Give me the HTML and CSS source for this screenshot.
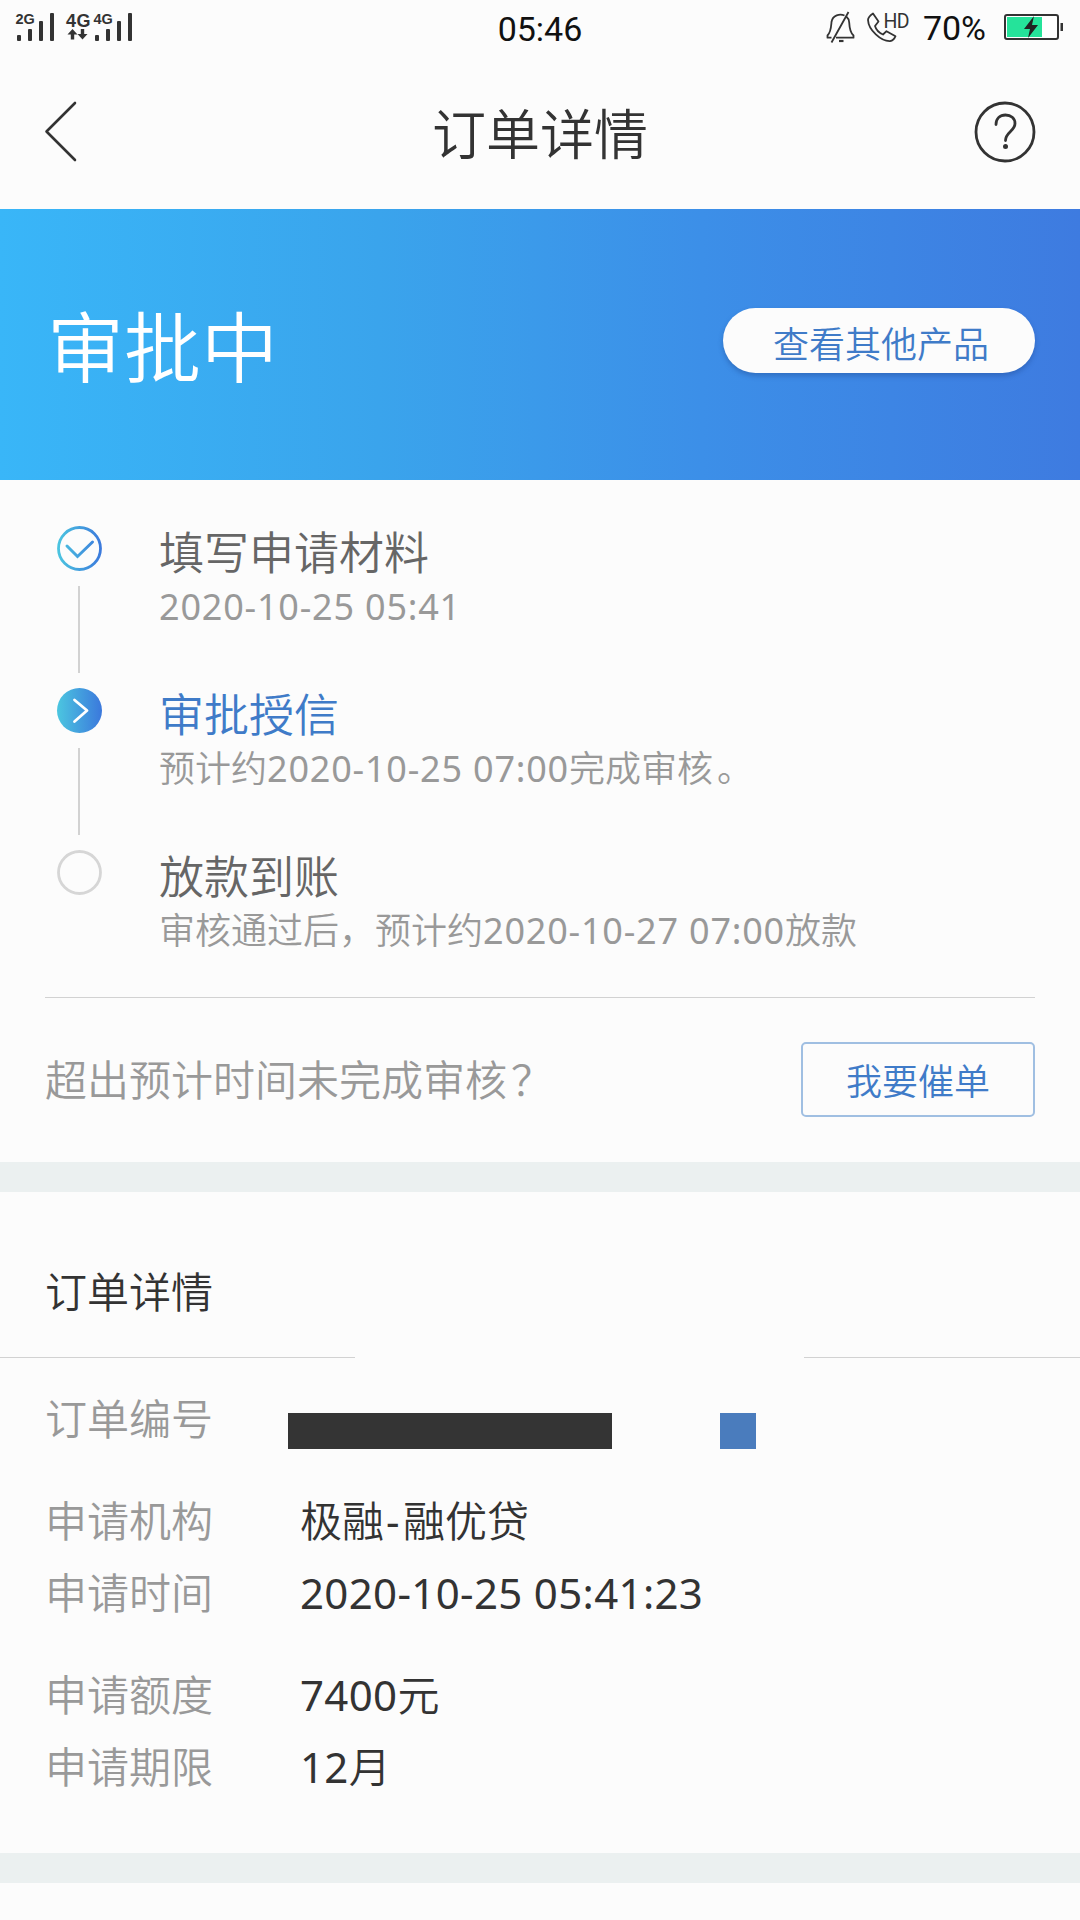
FILE: index.html
```html
<!DOCTYPE html>
<html lang="zh-CN">
<head>
  <meta charset="UTF-8" />
  <title>订单详情</title>
  <meta name="viewport" content="width=device-width, initial-scale=1" />
  <link rel="stylesheet" href="styles.css">
</head>
<body>
  <div class="status-bar">
    <svg class="signal" width="140" height="56" viewBox="0 0 140 56">
      <g fill="#333">
        <rect x="17" y="35" width="4" height="6" rx="1" />
        <rect x="28" y="29" width="4" height="12" rx="1" />
        <rect x="39" y="21" width="4" height="20" rx="1" />
        <rect x="50" y="13" width="4" height="28" rx="1" />
        <rect x="95" y="35" width="4" height="6" rx="1" />
        <rect x="106" y="29" width="4" height="12" rx="1" />
        <rect x="117" y="21" width="4" height="20" rx="1" />
        <rect x="128" y="13" width="4" height="28" rx="1" />
        <path d="M72.500 29l5 5.500h-3.300v5h-3.400v-5h-3.300zM82.500 39.500l-5-5.500h3.300v-5h3.400v5h3.300z" />
        <text class="net" x="15.500" y="24" font-size="14.500">2G</text>
        <text class="net" x="66" y="27" font-size="18" textLength="24.500">4G</text>
        <text class="net" x="93.500" y="24" font-size="14.500">4G</text>
      </g>
    </svg>
    <span class="clock">05:46</span>
    <div class="status-right">
      <svg width="90" height="56" viewBox="0 0 90 56" fill="none" stroke="#333" stroke-width="1.800" stroke-linejoin="round">
        <path d="M22.500 15.500C18 13.500 10.500 15 9.500 22c-.5 6-.5 10-4 13.500v2.200h4M14 37.700h17.500v-2.200c-3.500-3-4-7-4.300-13-.2-2.700-1.200-4.500-2.700-5.700M26.500 12L9.500 42.500" />
        <path d="M17 41h4.500" stroke-width="2.200" />
        <path d="M46 20c0-2 2.500-4.800 5-6.500l5.500 8-3.500 4.500c1 3.500 4.500 7 8 8.500l3.500-3.300 9 5c-1 2.500-3 4.500-5.500 5C59 41.500 46.500 30 46 20z" />
        <text class="hd" x="61.500" y="27.500" font-size="19.500" textLength="26">HD</text>
      </svg>
      <span class="percent">70%</span>
      <svg class="battery" width="62" height="56" viewBox="0 0 62 56">
        <rect x="2" y="15" width="53" height="24" rx="2" fill="#fff" stroke="#333" stroke-width="2" />
        <rect x="4" y="17" width="35" height="20" fill="#25e39a" />
        <path d="M31 16L21 29h6l-2 9 10-13h-6z" fill="#222" />
        <rect x="57.500" y="23" width="2.500" height="8" fill="#333" />
      </svg>
    </div>
  </div>

  <header>
    <svg class="back" width="34" height="62" viewBox="0 0 34 62" fill="none" stroke="#333" stroke-width="2.600">
      <path d="M31 2L2.500 30.500 31 59" stroke-linecap="round" stroke-linejoin="round" />
    </svg>
    <h1>订单详情</h1>
    <svg class="help" width="62" height="62" viewBox="0 0 62 62" fill="none" stroke="#333">
      <circle cx="31" cy="31" r="29" stroke-width="2.800" />
      <path d="M22 23.500c0-6 4-9.500 9.500-9.500s9.500 3.300 9.500 8.500c0 7.500-9.500 8.500-9.500 17" stroke-width="2.800" stroke-linecap="round" />
      <circle cx="31.500" cy="45.500" r="2.500" fill="#333" stroke="none" />
    </svg>
  </header>

  <section class="banner">
    <h2>审批中</h2>
    <button class="pill">查看其他产品</button>
  </section>

  <section class="progress">
    <div class="step">
      <div class="marker">
        <svg width="46" height="46" viewBox="0 0 46 46" fill="none">
          <defs>
            <linearGradient id="ring" gradientUnits="userSpaceOnUse" x1="0" y1="0" x2="46" y2="0">
              <stop offset="0" stop-color="#4cc8e0" />
              <stop offset="1" stop-color="#3b78dc" />
            </linearGradient>
          </defs>
          <circle cx="23.500" cy="22.500" r="21" stroke="url(#ring)" stroke-width="2.800" />
          <path d="M11 20l10.500 10.500L36.500 16" stroke="url(#ring)" stroke-width="3" stroke-linecap="round" />
        </svg>
        <i class="line"></i>
      </div>
      <div class="step-text">
        <h3>填写申请材料</h3>
        <p><span class="num">2020-10-25 05:41</span></p>
      </div>
    </div>
    <div class="step active">
      <div class="marker">
        <svg width="46" height="46" viewBox="0 0 46 46" fill="none">
          <circle cx="23.500" cy="22.500" r="22.500" fill="url(#ring)" />
          <path d="M18.500 12L31 22.500 18.500 33.500" stroke="#fff" stroke-width="2.800" stroke-linecap="round" stroke-linejoin="round" />
        </svg>
        <i class="line"></i>
      </div>
      <div class="step-text">
        <h3>审批授信</h3>
        <p>预计约<span class="num">2020-10-25 07:00</span>完成审核<span class="stop">。</span></p>
      </div>
    </div>
    <div class="step">
      <div class="marker">
        <svg width="46" height="46" viewBox="0 0 46 46" fill="none">
          <circle cx="23.500" cy="22.500" r="21" stroke="#d6d6d6" stroke-width="2.800" />
        </svg>
      </div>
      <div class="step-text">
        <h3>放款到账</h3>
        <p>审核通过后，预计约<span class="num">2020-10-27 07:00</span>放款</p>
      </div>
    </div>
  </section>

  <section class="remind">
    <span class="question">超出预计时间未完成审核<span class="stop">？</span></span>
    <button class="remind-btn">我要催单</button>
  </section>

  <section class="order">
    <h4>订单详情</h4>
    <div class="rule"><i class="rule-left"></i><i class="rule-right"></i></div>
    <dl class="rows">
      <dt>订单编号</dt>
      <dd class="masked"><i class="mask-number"></i><i class="mask-copy"></i></dd>
    </dl>
    <dl class="rows">
      <dt>申请机构</dt>
      <dd>极融<span class="num dash">-</span>融优贷</dd>
      <dt>申请时间</dt>
      <dd><span class="num">2020-10-25 05:41:23</span></dd>
    </dl>
    <dl class="rows">
      <dt>申请额度</dt>
      <dd><span class="num">7400</span>元</dd>
      <dt>申请期限</dt>
      <dd><span class="num">12</span>月</dd>
    </dl>
  </section>
</body>
</html>
```
FILE: styles.css
```css
:root {
  --bg: #fcfcfc;
  --text: #333;
  --muted: #999;
  --blue: #3f7bc8;
  --line: #d2d2d2;
  --gap: #ebf0f0;
}

* {
  box-sizing: border-box;
}

body {
  margin: 0;
  height: 1920px;
  overflow: hidden;
  font-family: "Noto Sans CJK SC", sans-serif;
  font-weight: 350;
  background: var(--bg);
  color: var(--text);
}

h1, h2, h3, h4, p, dl, dd {
  margin: 0;
  font-weight: inherit;
}

button {
  padding: 0;
  font: inherit;
  color: var(--blue);
}

.num {
  font-family: "Noto Sans", sans-serif;
  font-weight: 400;
  letter-spacing: 0.022em;
}

.rows .num {
  letter-spacing: 0.008em;
}

.rows .dash {
  padding: 0 3px 0 2px;
}

.stop {
  padding-left: 4px;
}

/* status bar */
.status-bar {
  height: 56px;
  display: grid;
  grid-template-columns: 1fr auto 1fr;
  font-family: Roboto, sans-serif;
  font-weight: 400;
  font-size: 34px;
  line-height: 59px;
  color: #111;
}

.net {
  font-family: "Liberation Sans", sans-serif;
  font-weight: bold;
}

.hd {
  font-family: Roboto, sans-serif;
  fill: #333;
  stroke: none;
}

.status-right {
  display: flex;
  justify-content: flex-end;
  padding-right: 15px;
  line-height: 56px;
}

.percent {
  margin: 0 17px 0 11px;
}

header {
  height: 153px;
  padding: 0 44px 2px;
  display: flex;
  justify-content: space-between;
  align-items: center;
}

header h1 {
  font-size: 54px;
  line-height: 80px;
}

.back {
  margin-right: 28px;
}

.banner {
  height: 271px;
  padding: 0 45px 0 47px;
  display: flex;
  justify-content: space-between;
  align-items: center;
  background: linear-gradient(90deg, #39b6f8, #3aa4ec 35%, #3c8fe8 65%, #3e7be0);
}

.banner h2 {
  padding-bottom: 1px;
  font-size: 77px;
  line-height: 100px;
  color: #fff;
}

.pill {
  width: 312px;
  height: 65px;
  margin-bottom: 8px;
  padding: 3px 0 0 4px;
  border: none;
  border-radius: 33px;
  background: var(--bg);
  box-shadow: 0 3px 5px rgba(30, 70, 140, 0.4);
  font-size: 36px;
  line-height: 60px;
}

/* progress */
.progress {
  height: 518px;
  margin: 0 45px;
  padding: 46px 0 0 11px;
  border-bottom: 1px solid var(--line);
}

.step {
  height: 162px;
  display: flex;
}

.marker {
  width: 46px;
  margin-right: 57px;
  display: flex;
  flex-direction: column;
  align-items: center;
}

.line {
  width: 2px;
  height: 87px;
  margin-top: 14px;
  background: var(--line);
}

.step-text {
  margin-top: -2px;
}

.step-text h3 {
  font-size: 45px;
  line-height: 54px;
  color: #666;
}

.step-text p {
  font-size: 36px;
  line-height: 52px;
  color: var(--muted);
}

.active h3 {
  color: var(--blue);
}

.remind {
  height: 164px;
  padding: 0 45px 2px;
  display: flex;
  justify-content: space-between;
  align-items: center;
  font-size: 42px;
  color: var(--muted);
}

.question {
  padding-bottom: 4px;
}

.remind-btn {
  width: 234px;
  height: 75px;
  border: 2px solid #a0bfe2;
  border-radius: 5px;
  background: var(--bg);
  font-size: 36px;
}

/* order details */
.order {
  height: 721px;
  border-top: 30px solid var(--gap);
  border-bottom: 30px solid var(--gap);
}

.order h4 {
  padding: 62px 45px 0;
  height: 165px;
  font-size: 42px;
  line-height: 72px;
}

.rule {
  display: flex;
  justify-content: space-between;
  height: 1px;
  margin-bottom: 23px;
}

.rule-left {
  width: 355px;
  background: var(--line);
}

.rule-right {
  width: 276px;
  background: var(--line);
}

.rows {
  display: grid;
  grid-template-columns: 255px 1fr;
  grid-auto-rows: 72px;
  padding-left: 45px;
  margin-bottom: 30px;
  font-size: 42px;
  line-height: 72px;
}

.rows dt {
  color: var(--muted);
}

.masked {
  display: flex;
  align-items: flex-start;
  gap: 108px;
  padding-top: 32px;
  margin-left: -12px;
}

.mask-number {
  width: 324px;
  height: 36px;
  background: #343434;
}

.mask-copy {
  width: 36px;
  height: 36px;
  background: #4a7cbd;
}
```
